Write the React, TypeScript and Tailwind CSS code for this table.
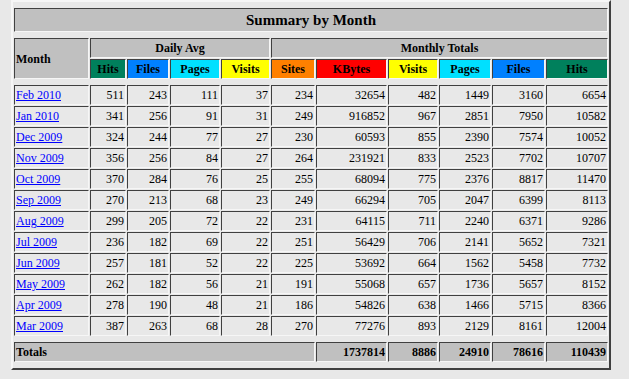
type Row = {
  month: string;
  daily: number[];
  totals: number[];
};

const rows: Row[] = [
  { month: 'Feb 2010', daily: [511, 243, 111, 37], totals: [234, 32654, 482, 1449, 3160, 6654] },
  { month: 'Jan 2010', daily: [341, 256, 91, 31], totals: [249, 916852, 967, 2851, 7950, 10582] },
  { month: 'Dec 2009', daily: [324, 244, 77, 27], totals: [230, 60593, 855, 2390, 7574, 10052] },
  { month: 'Nov 2009', daily: [356, 256, 84, 27], totals: [264, 231921, 833, 2523, 7702, 10707] },
  { month: 'Oct 2009', daily: [370, 284, 76, 25], totals: [255, 68094, 775, 2376, 8817, 11470] },
  { month: 'Sep 2009', daily: [270, 213, 68, 23], totals: [249, 66294, 705, 2047, 6399, 8113] },
  { month: 'Aug 2009', daily: [299, 205, 72, 22], totals: [231, 64115, 711, 2240, 6371, 9286] },
  { month: 'Jul 2009', daily: [236, 182, 69, 22], totals: [251, 56429, 706, 2141, 5652, 7321] },
  { month: 'Jun 2009', daily: [257, 181, 52, 22], totals: [225, 53692, 664, 1562, 5458, 7732] },
  { month: 'May 2009', daily: [262, 182, 56, 21], totals: [191, 55068, 657, 1736, 5657, 8152] },
  { month: 'Apr 2009', daily: [278, 190, 48, 21], totals: [186, 54826, 638, 1466, 5715, 8366] },
  { month: 'Mar 2009', daily: [387, 263, 68, 28], totals: [270, 77276, 893, 2129, 8161, 12004] },
];

const headers = [
  { label: 'Hits', bg: 'bg-[#00805c]' },
  { label: 'Files', bg: 'bg-[#0080ff]' },
  { label: 'Pages', bg: 'bg-[#00e0ff]' },
  { label: 'Visits', bg: 'bg-[#ffff00]' },
  { label: 'Sites', bg: 'bg-[#ff8000]' },
  { label: 'KBytes', bg: 'bg-[#ff0000]' },
  { label: 'Visits', bg: 'bg-[#ffff00]' },
  { label: 'Pages', bg: 'bg-[#00e0ff]' },
  { label: 'Files', bg: 'bg-[#0080ff]' },
  { label: 'Hits', bg: 'bg-[#00805c]' },
];

// inset cell border, like an old border=2 table
const cell =
  'border border-t-[#404040] border-l-[#404040] border-b-[#f6f6f6] border-r-[#f6f6f6] flex items-center px-[1px]';

const grandTotals = [1737814, 8886, 24910, 78616, 110439];

export default function App() {
  return (
    <div className="min-h-screen bg-[#e8e8e8] pl-[11px] text-black font-['Liberation_Serif',serif] text-[12px] leading-none">
      <div className="w-[600px] border-2 border-t-[#f6f6f6] border-l-[#f6f6f6] border-b-[#404040] border-r-[#404040] p-[1px]">
        <div className="grid grid-cols-[75px_36px_42px_50px_49px_44px_71px_50px_52px_53px_62px] gap-[1px]">
          <div className="col-span-11 h-[4px]" />

          {/* Title */}
          <div className={`${cell} col-span-11 h-[24px] justify-center bg-[#c0c0c0] font-bold text-[15px]`}>
            Summary by Month
          </div>
          <div className="col-span-11 h-[4px]" />

          {/* Header */}
          <div className={`${cell} row-span-2 bg-[#c0c0c0] font-bold`}>Month</div>
          <div className={`${cell} col-span-4 h-[20px] justify-center bg-[#c0c0c0] font-bold`}>Daily Avg</div>
          <div className={`${cell} col-span-6 h-[20px] justify-center bg-[#c0c0c0] font-bold`}>Monthly Totals</div>
          {headers.map((h, i) => (
            <div key={i} className={`${cell} h-[20px] justify-center font-bold ${h.bg}`}>
              {h.label}
            </div>
          ))}
          <div className="col-span-11 h-[4px]" />

          {/* Months */}
          {rows.map((r) => (
            <div key={r.month} className="contents">
              <div className={`${cell} h-[20px] bg-[#e8e8e8]`}>
                <a href="#" className="text-[#0000ff] underline">
                  {r.month}
                </a>
              </div>
              {[...r.daily, ...r.totals].map((v, i) => (
                <div key={i} className={`${cell} h-[20px] justify-end bg-[#e8e8e8]`}>
                  {v}
                </div>
              ))}
            </div>
          ))}
          <div className="col-span-11 h-[4px]" />

          {/* Totals */}
          <div className={`${cell} col-span-6 h-[20px] bg-[#c0c0c0] font-bold`}>Totals</div>
          {grandTotals.map((v, i) => (
            <div key={i} className={`${cell} h-[20px] justify-end bg-[#c0c0c0] font-bold`}>
              {v}
            </div>
          ))}
          <div className="col-span-11 h-[4px]" />
        </div>
      </div>
    </div>
  );
}
